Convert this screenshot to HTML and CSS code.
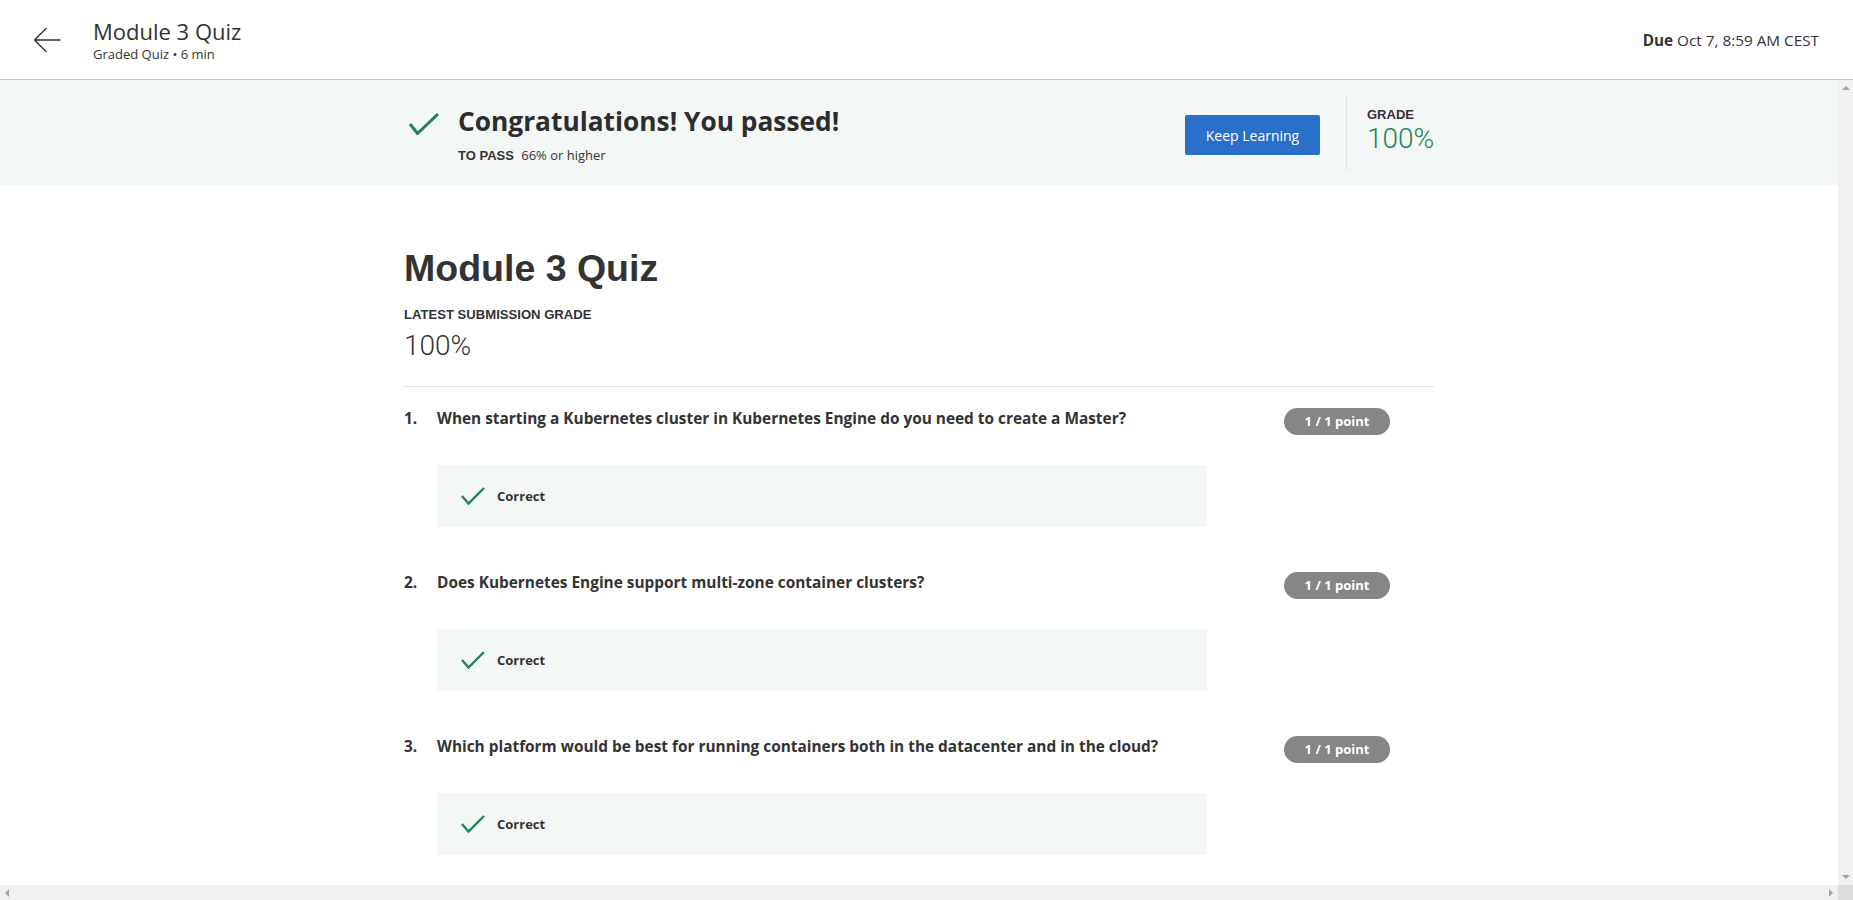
FILE: index.html
```html
<!DOCTYPE html>
<html lang="en">
<head>
<meta charset="utf-8">
<title>Module 3 Quiz</title>
<link rel="stylesheet" href="styles.css">
</head>
<body>
<div class="app">
  <header class="topbar">
    <svg class="back" width="28" height="26" viewBox="0 0 28 26" aria-hidden="true"><path d="M27.5 13H1.5M13.5 1L1.5 13l12 12" fill="none" stroke="#333" stroke-width="1.4"/></svg>
    <div class="title-block">
      <div class="title">Module 3 Quiz</div>
      <div class="subtitle">Graded Quiz • 6 min</div>
    </div>
    <div class="due"><b>Due</b> Oct 7, 8:59 AM CEST</div>
  </header>
  <div class="viewport">
    <div class="scroll-row">
      <main class="content">
        <section class="banner">
          <div class="banner-inner">
            <svg class="pass-check" width="30" height="22" viewBox="0 0 30 22" aria-hidden="true"><path d="M1 11l7.5 9.5L29 1" fill="none" stroke="#1f8354" stroke-width="3"/></svg>
            <div class="pass-text">
              <h2 class="pass-title">Congratulations! You passed!</h2>
              <div class="pass-sub"><span class="lbl">TO PASS</span> 66% or higher</div>
            </div>
            <div class="banner-actions">
              <button class="btn">Keep Learning</button>
              <div class="vdiv"></div>
              <div class="grade">
                <div class="lbl">GRADE</div>
                <div class="grade-val">100%</div>
              </div>
            </div>
          </div>
        </section>
        <section class="quiz">
          <h1 class="quiz-title">Module 3 Quiz</h1>
          <div class="latest-lbl">LATEST SUBMISSION GRADE</div>
          <div class="latest-val">100%</div>
          <div class="rule"></div>

          <div class="question">
            <div class="q-row">
              <span class="q-num">1.</span>
              <span class="q-text">When starting a Kubernetes cluster in Kubernetes Engine do you need to create a Master?</span>
              <span class="badge">1 / 1 point</span>
            </div>
            <div class="answer">
              <svg class="ok" width="24" height="18" viewBox="0 0 24 18" aria-hidden="true"><path d="M1 9l6.5 7.5L23 1" fill="none" stroke="#1f8354" stroke-width="2.4"/></svg>
              <span class="ok-text">Correct</span>
            </div>
          </div>

          <div class="question">
            <div class="q-row">
              <span class="q-num">2.</span>
              <span class="q-text">Does Kubernetes Engine support multi-zone container clusters?</span>
              <span class="badge">1 / 1 point</span>
            </div>
            <div class="answer">
              <svg class="ok" width="24" height="18" viewBox="0 0 24 18" aria-hidden="true"><path d="M1 9l6.5 7.5L23 1" fill="none" stroke="#1f8354" stroke-width="2.4"/></svg>
              <span class="ok-text">Correct</span>
            </div>
          </div>

          <div class="question">
            <div class="q-row">
              <span class="q-num">3.</span>
              <span class="q-text">Which platform would be best for running containers both in the datacenter and in the cloud?</span>
              <span class="badge">1 / 1 point</span>
            </div>
            <div class="answer">
              <svg class="ok" width="24" height="18" viewBox="0 0 24 18" aria-hidden="true"><path d="M1 9l6.5 7.5L23 1" fill="none" stroke="#1f8354" stroke-width="2.4"/></svg>
              <span class="ok-text">Correct</span>
            </div>
          </div>
        </section>
      </main>
      <div class="vbar">
        <span class="tri tri-up"></span>
        <span class="tri tri-down"></span>
      </div>
    </div>
    <div class="hrow">
      <div class="hbar">
        <span class="tri tri-left"></span>
        <span class="tri tri-right"></span>
      </div>
      <div class="corner"></div>
    </div>
  </div>
</div>
</body>
</html>
```

FILE: styles.css
```css
html, body {
  margin: 0;
  padding: 0;
  height: 100%;
  overflow: hidden;
  background: #fff;
  font-family: "Open Sans", "DejaVu Sans", sans-serif;
  color: #333;
}

.app {
  height: 100vh;
  display: flex;
  flex-direction: column;
}

/* top bar */
.topbar {
  height: 79px;
  flex: 0 0 79px;
  border-bottom: 1px solid #c9c9c9;
  display: flex;
  align-items: center;
  padding: 0 34px 0 33px;
}
.back {
  display: block;
  margin-right: 32px;
}
.title-block {
  display: flex;
  flex-direction: column;
}
.title {
  font-size: 22px;
  line-height: 28px;
  color: #333;
}
.subtitle {
  font-size: 13px;
  line-height: 18px;
  color: #333;
}
.due {
  margin-left: auto;
  font-size: 15.3px;
  line-height: 22px;
  color: #333;
}
.due b {
  font-weight: 700;
}

/* viewport with fake scrollbars */
.viewport {
  flex: 1;
  min-height: 0;
  display: flex;
  flex-direction: column;
}
.scroll-row {
  flex: 1;
  min-height: 0;
  display: flex;
}
.content {
  flex: 1;
  min-width: 0;
  overflow: hidden;
}
.vbar {
  width: 15px;
  flex: 0 0 15px;
  background: #f1f1f1;
  display: flex;
  flex-direction: column;
  justify-content: space-between;
  align-items: center;
  padding: 6px 0;
  box-sizing: border-box;
}
.hrow {
  height: 15px;
  flex: 0 0 15px;
  display: flex;
}
.hbar {
  flex: 1;
  background: #f1f1f1;
  display: flex;
  justify-content: space-between;
  align-items: center;
  padding: 0 5px;
}
.corner {
  width: 15px;
  background: #dcdcdc;
}
.tri {
  display: block;
  width: 0;
  height: 0;
}
.tri-up {
  border-left: 4px solid transparent;
  border-right: 4px solid transparent;
  border-bottom: 4px solid #a3a3a3;
}
.tri-down {
  border-left: 4px solid transparent;
  border-right: 4px solid transparent;
  border-top: 4px solid #a3a3a3;
}
.tri-left {
  border-top: 4px solid transparent;
  border-bottom: 4px solid transparent;
  border-right: 4px solid #a3a3a3;
}
.tri-right {
  border-top: 4px solid transparent;
  border-bottom: 4px solid transparent;
  border-left: 4px solid #a3a3a3;
}

/* banner */
.banner {
  background: #f3f8f6;
}
.banner-inner {
  width: 1030px;
  margin: 0 auto;
  height: 105px;
  display: flex;
  align-items: center;
}
.pass-check {
  display: block;
  align-self: flex-start;
  margin: 33px 19px 0 5px;
}
.pass-text {
  display: flex;
  flex-direction: column;
  gap: 7px;
}
.pass-title {
  margin: 2px 0 0;
  font-size: 26.3px;
  line-height: 36px;
  font-weight: 700;
  color: #2d2d2d;
}
.pass-sub {
  font-size: 13px;
  line-height: 18px;
  color: #333;
}
.lbl {
  font-family: "Liberation Sans", Arial, sans-serif;
  font-weight: 700;
  font-size: 13px;
  line-height: 18px;
  color: #333;
}
.pass-sub .lbl {
  margin-right: 4px;
}
.banner-actions {
  margin-left: auto;
  display: flex;
  align-items: center;
  height: 100%;
}
.btn {
  width: 135px;
  height: 40px;
  margin-top: 5px;
  margin-right: 26px;
  border: 0;
  border-radius: 2px;
  background: #2a6fca;
  color: #fff;
  font-family: "Open Sans", sans-serif;
  font-size: 14px;
  font-weight: 400;
  padding: 0;
}
.vdiv {
  width: 1px;
  height: 74px;
  background: #dde2e0;
  margin-right: 20px;
}
.grade {
  align-self: flex-start;
  margin-top: 26px;
  width: 67px;
}
.grade-val {
  font-family: Roboto, "Open Sans", sans-serif;
  font-weight: 300;
  font-size: 28px;
  line-height: 30px;
  color: #1f8354;
}

/* quiz body */
.quiz {
  width: 1030px;
  margin: 0 auto;
  padding-top: 60px;
}
.quiz-title {
  margin: 0;
  font-family: "Liberation Sans", Arial, sans-serif;
  font-weight: 700;
  font-size: 37.5px;
  line-height: 46px;
  color: #333;
}
.latest-lbl {
  margin-top: 15px;
  font-family: "Liberation Sans", Arial, sans-serif;
  font-weight: 700;
  font-size: 13.1px;
  line-height: 18px;
  color: #333;
}
.latest-val {
  margin-top: 4px;
  font-family: Roboto, "Open Sans", sans-serif;
  font-weight: 300;
  font-size: 28px;
  line-height: 36px;
  color: #333;
}
.rule {
  margin-top: 22px;
  height: 1px;
  background: #e1e1e1;
}
.question {
  margin-top: 44px;
}
.rule + .question {
  margin-top: 20px;
}
.q-row {
  display: flex;
  align-items: flex-start;
  height: 24px;
  font-size: 15.4px;
  line-height: 24px;
  font-weight: 700;
  color: #333;
}
.q-num {
  width: 33px;
  flex: 0 0 33px;
}
.q-text {
  flex: 1;
}
.badge {
  margin: 1px 44px 0 20px;
  width: 106px;
  height: 27px;
  flex: 0 0 106px;
  border-radius: 14px;
  background: #868686;
  color: #fff;
  font-size: 13px;
  line-height: 27px;
  font-weight: 700;
  text-align: center;
}
.answer {
  margin: 34px 0 0 33px;
  width: 770px;
  height: 62px;
  background: #f3f8f6;
  display: flex;
  align-items: center;
  padding-left: 24px;
  box-sizing: border-box;
}
.ok {
  display: block;
  margin-right: 12px;
}
.ok-text {
  font-size: 13px;
  font-weight: 700;
  color: #333;
}
```
